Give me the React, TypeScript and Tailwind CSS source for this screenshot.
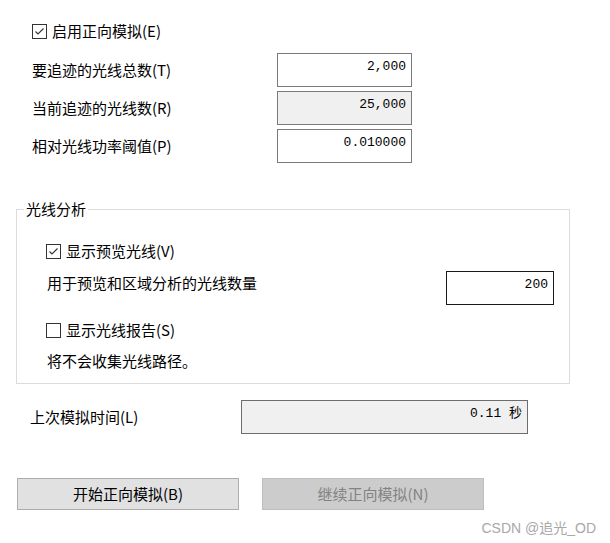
import React from "react";

// Windows-style dialog: forward simulation settings
function CheckBox({ checked, label }: { checked: boolean; label: string }) {
  return (
    <div className="flex items-center h-[20px] gap-[5px]">
      <div className="w-[15px] h-[15px] border border-[#333333] bg-white flex items-center justify-center">
        {checked && (
          <svg width="13" height="13" viewBox="0 0 13 13">
            <path d="M2.5 6.5 L5 9 L10.5 3.5" fill="none" stroke="#333333" strokeWidth="1.1" />
          </svg>
        )}
      </div>
      <span>{label}</span>
    </div>
  );
}

function NumBox({ value, className }: { value: string; className: string }) {
  return (
    <div
      className={
        "h-[34px] border text-right pr-[5px] pt-[5px] text-[13px] leading-[16px] font-['Liberation_Mono','Noto_Sans_CJK_SC',monospace] " +
        className
      }
    >
      {value}
    </div>
  );
}

export default function App() {
  return (
    <div className="w-[610px] h-[543px] bg-white text-black text-[15px] leading-[20px] font-['Noto_Sans_CJK_SC',sans-serif] overflow-hidden">
      <div className="pt-[21px] pl-[32px]">
        <CheckBox checked label="启用正向模拟(E)" />
      </div>

      <div className="mt-[12px] pl-[32px] flex flex-col gap-[4px]">
        <div className="flex items-center h-[34px]">
          <span className="w-[245px]">要追迹的光线总数(T)</span>
          <NumBox value="2,000" className="w-[135px] border-[#7a7a7a] bg-white" />
        </div>
        <div className="flex items-center h-[34px]">
          <span className="w-[245px]">当前追迹的光线数(R)</span>
          <NumBox value="25,000" className="w-[135px] border-[#7a7a7a] bg-[#f0f0f0]" />
        </div>
        <div className="flex items-center h-[34px]">
          <span className="w-[245px]">相对光线功率阈值(P)</span>
          <NumBox value="0.010000" className="w-[135px] border-[#7a7a7a] bg-white" />
        </div>
      </div>

      <fieldset className="mt-[38px] ml-[16px] w-[554px] border border-[#dcdcdc] p-0">
        <legend className="ml-[7px] px-[2px] leading-[16px]">光线分析</legend>
        <div className="pl-[29px] pr-[15px] pb-[12px]">
          <div className="mt-[24px]">
            <CheckBox checked label="显示预览光线(V)" />
          </div>
          <div className="mt-[10px] flex justify-between items-start">
            <span className="pt-[2px] pl-[1px]">用于预览和区域分析的光线数量</span>
            <NumBox value="200" className="w-[108px] border-[#1a1a1a] bg-white" />
          </div>
          <div className="mt-[15px]">
            <CheckBox checked={false} label="显示光线报告(S)" />
          </div>
          <div className="mt-[11px] pl-[1px]">将不会收集光线路径。</div>
        </div>
      </fieldset>

      <div className="mt-[16px] pl-[30px] flex items-center">
        <span className="w-[211px]">上次模拟时间(L)</span>
        <NumBox value="0.11 秒" className="w-[287px] border-[#6d6d6d] bg-[#f0f0f0]" />
      </div>

      <div className="mt-[44px] pl-[17px] flex gap-[23px]">
        <button className="w-[222px] h-[32px] bg-[#e1e1e1] border border-[#adadad] text-black">
          开始正向模拟(B)
        </button>
        <button disabled className="w-[222px] h-[32px] bg-[#cccccc] border border-[#bfbfbf] text-[#838383]">
          继续正向模拟(N)
        </button>
      </div>

      <div className="mt-[10px] pr-[14px] flex justify-end text-[14px] leading-[16px] text-[#a8a8a8] font-['Liberation_Sans','Noto_Sans_CJK_SC',sans-serif]">
        CSDN @追光_OD
      </div>
    </div>
  );
}
